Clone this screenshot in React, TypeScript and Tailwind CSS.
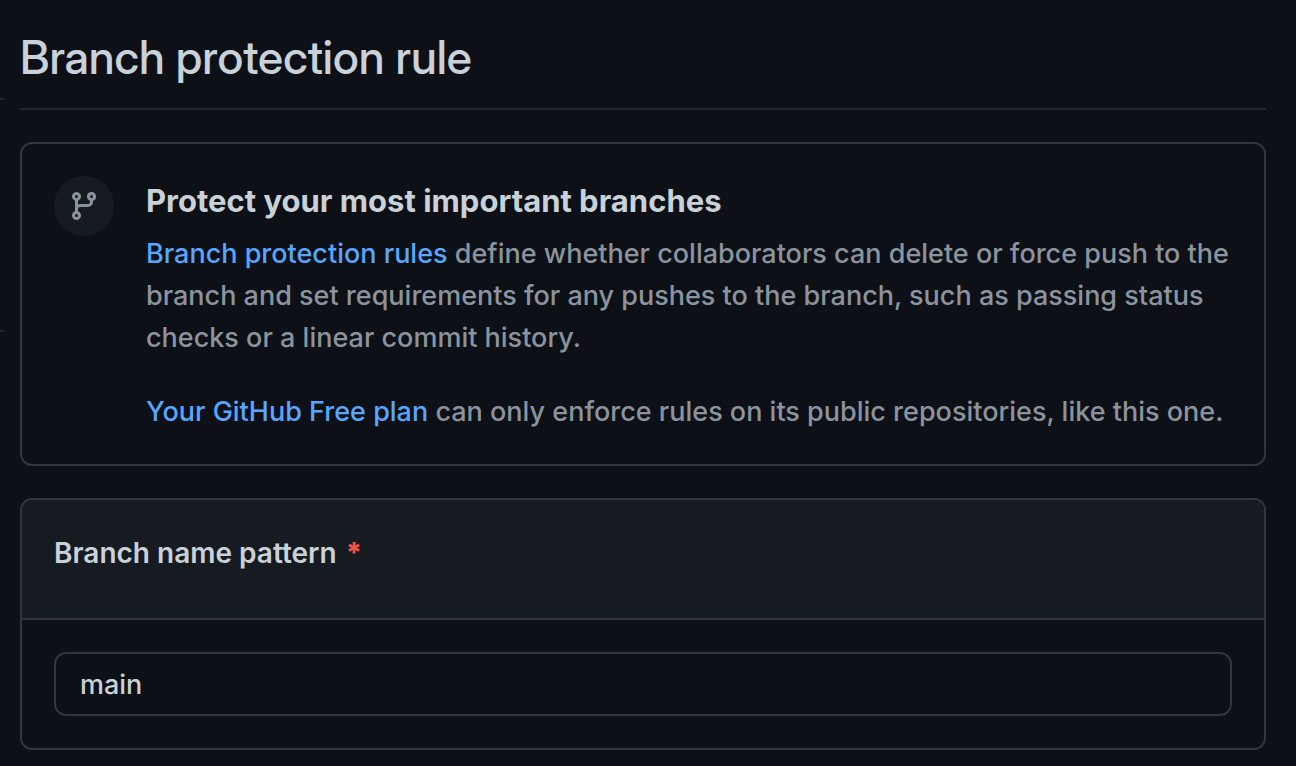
import React from "react";

const BranchIcon = () => (
  <svg viewBox="0 0 16 16" className="size-8 fill-[#8b949e]" aria-hidden="true">
    <path d="M9.5 3.25a2.25 2.25 0 1 1 3 2.122V6A2.5 2.5 0 0 1 10 8.5H6a1 1 0 0 0-1 1v1.128a2.251 2.251 0 1 1-1.5 0V5.372a2.25 2.25 0 1 1 1.5 0v1.836A2.493 2.493 0 0 1 6 7h4a1 1 0 0 0 1-1v-.628A2.25 2.25 0 0 1 9.5 3.25Zm-6 0a.75.75 0 1 0 1.5 0 .75.75 0 0 0-1.5 0Zm8.25-.75a.75.75 0 1 0 0 1.5.75.75 0 0 0 0-1.5ZM4.25 12a.75.75 0 1 0 0 1.5.75.75 0 0 0 0-1.5Z" />
  </svg>
);

export default function App() {
  return (
    <main className="relative min-h-screen bg-[#0d1117] pt-7 pr-[30px] pb-4 pl-5 font-['Inter',sans-serif] text-[#c9d1d9]">
      <span className="absolute top-[98px] left-0 h-0.5 w-1 bg-[#21262d]" />
      <span className="absolute top-[330px] left-0 h-0.5 w-1 bg-[#21262d]" />
      <h1 className="border-b-2 border-[#21262d] pb-[22px] font-['Inter_Display','Inter',sans-serif] text-[46px] leading-[58px] font-medium">
        Branch protection rule
      </h1>

      <section className="mt-8 flex gap-8 rounded-xl border-2 border-[#30363d] pt-8 pr-6 pb-[31px] pl-8">
        <div className="flex size-[60px] shrink-0 items-center justify-center rounded-full bg-[#161b22]">
          <BranchIcon />
        </div>
        <div className="min-w-0 text-[27px] leading-[42px] font-medium text-[#8b949e]">
          <h2 className="mb-[7px] text-[31px] leading-[50px] font-bold text-[#c9d1d9]">
            Protect your most important branches
          </h2>
          <p>
            <a href="#rules" className="text-[#58a6ff]">Branch protection rules</a> define whether collaborators can delete or force push to the branch and set requirements for any pushes to the branch, such as passing status checks or a linear commit history.
          </p>
          <p className="mt-8">
            <a href="#plan" className="text-[#58a6ff]">Your GitHub Free plan</a> can only enforce rules on its public repositories, like this one.
          </p>
        </div>
      </section>

      <section className="mt-8 overflow-hidden rounded-xl border-2 border-[#30363d]">
        <div className="border-b-2 border-[#30363d] bg-[#161b22] px-8 pt-8 pb-11">
          <label htmlFor="pattern" className="block text-[28px] leading-[42px] font-semibold">
            Branch name pattern <span className="ml-0.5 font-extrabold text-[#f85149]">*</span>
          </label>
        </div>
        <div className="p-8">
          <input
            id="pattern"
            defaultValue="main"
            className="block h-16 w-full rounded-xl border-2 border-[#30363d] bg-[#0d1117] px-6 text-[27px] font-medium outline-none"
          />
        </div>
      </section>
    </main>
  );
}
